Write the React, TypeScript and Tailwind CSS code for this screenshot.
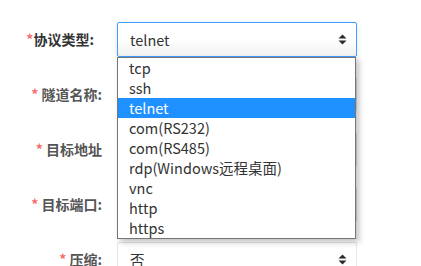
import React from 'react';

const OPTIONS = ['tcp', 'ssh', 'telnet', 'com(RS232)', 'com(RS485)', 'rdp(Windows远程桌面)', 'vnc', 'http', 'https'];

const font = { fontFamily: '"Noto Sans CJK SC", "Noto Sans", sans-serif' };

const Arrows: React.FC = () => (
  <svg width="9" height="11" viewBox="0 0 9 11" className="text-[#2b2b2b]">
    <path d="M4.5 0.5 L8.5 4.5 L0.5 4.5 Z" fill="currentColor" />
    <path d="M4.5 10.5 L8.5 6.5 L0.5 6.5 Z" fill="currentColor" />
  </svg>
);

const Label: React.FC<{ text: string; strong?: boolean; tight?: boolean }> = ({ text, strong, tight }) => (
  <div
    className={`w-[117px] shrink-0 text-right text-[14px] font-bold ${tight ? 'pr-[23px]' : 'pr-[15px]'} ${
      strong ? 'text-[#333]' : 'text-[#555]'
    }`}
  >
    <span className="text-[#f56c6c]">*</span>
    {tight ? '' : ' '}
    {text}
  </div>
);

export default function App() {
  return (
    <div className="w-[421px] h-[266px] bg-white overflow-hidden pt-[22px]" style={font}>
      <div className="flex flex-col gap-[20px]">
        {/* 协议类型 + open dropdown */}
        <div className="flex items-center h-[35px]">
          <Label text="协议类型:" strong tight />
          <div className="relative w-[240px]">
            <div className="h-[35px] flex items-center justify-between pl-[12px] pr-[9px] border border-[#409eff] rounded-[2px] bg-gradient-to-b from-white via-white to-[#f1f1f1] shadow-[0_2px_6px_rgba(0,0,0,0.1)] text-[14.5px] text-[#333]">
              <span>telnet</span>
              <Arrows />
            </div>
            <ul className="absolute left-0 top-[35px] w-[239px] z-10 bg-white border border-[#767676] shadow-[3px_3px_6px_rgba(0,0,0,0.25)]">
              {OPTIONS.map((o) => (
                <li
                  key={o}
                  className={`h-[20px] leading-[20px] pl-[11px] text-[14.5px] ${
                    o === 'telnet' ? 'bg-[#1e90ff] text-white' : 'text-[#333]'
                  }`}
                >
                  {o}
                </li>
              ))}
            </ul>
          </div>
        </div>

        {['隧道名称:', '目标地址', '目标端口:'].map((t) => (
          <div key={t} className="flex items-center h-[35px]">
            <Label text={t} />
            <div className="w-[240px] h-[35px] border border-[#dcdfe6] rounded-[2px]" />
          </div>
        ))}

        <div className="flex items-center h-[35px]">
          <Label text="压缩:" />
          <div className="w-[240px] h-[35px] flex items-center justify-between pl-[12px] pr-[9px] border border-[#e4e7ed] rounded-[2px] text-[14.5px] text-[#333]">
            <span>否</span>
            <Arrows />
          </div>
        </div>
      </div>
    </div>
  );
}
